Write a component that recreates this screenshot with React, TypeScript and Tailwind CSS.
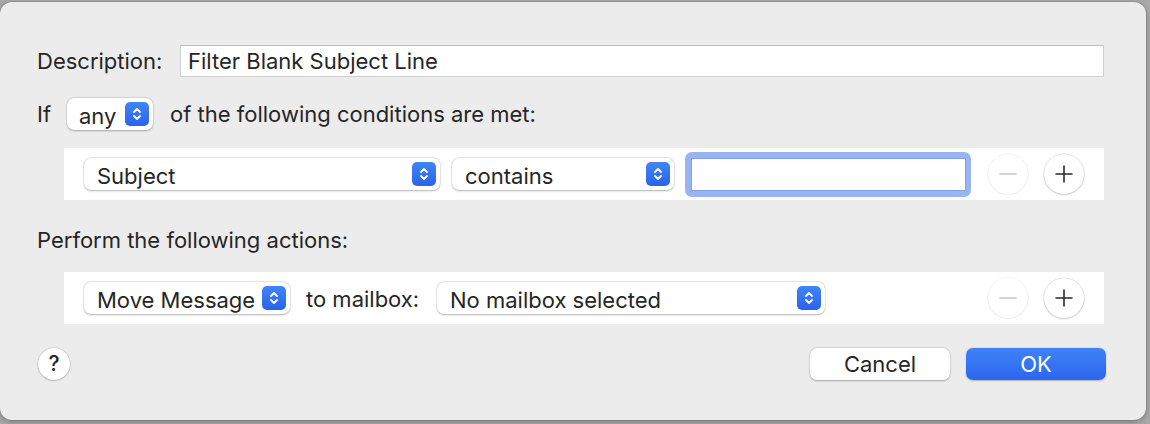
import React from 'react';

const FONT = 'font-[Inter,"Liberation_Sans",sans-serif]';
const POPUP =
  'relative flex h-[32px] shrink-0 items-center rounded-[7px] bg-white pl-[13px] text-[22px] text-[#262626] shadow-[0_0.5px_2px_rgba(0,0,0,0.28),0_0_0_0.5px_rgba(0,0,0,0.08)]';

function Stepper() {
  return (
    <span className="absolute right-[4px] top-[4px] flex h-[24px] w-[24px] items-center justify-center rounded-[5px] bg-gradient-to-b from-[#4285f6] to-[#2a63e8]">
      <svg width="10" height="16" viewBox="0 0 10 16" fill="none">
        <path
          d="M2 6 L5 3 L8 6 M2 10 L5 13 L8 10"
          stroke="white"
          strokeWidth="1.8"
          strokeLinecap="round"
          strokeLinejoin="round"
        />
      </svg>
    </span>
  );
}

function Popup({ label, width }: { label: string; width: string }) {
  return (
    <div className={`${POPUP} ${width}`}>
      <span className="pt-[3px] leading-[28px]">{label}</span>
      <Stepper />
    </div>
  );
}

function RoundButton({ kind }: { kind: 'minus' | 'plus' }) {
  const disabled = kind === 'minus';
  return (
    <button
      type="button"
      aria-label={kind === 'minus' ? 'Remove' : 'Add'}
      className={`flex h-[40px] w-[40px] shrink-0 items-center justify-center rounded-full bg-white ${
        disabled
          ? 'shadow-[0_0_0_0.5px_rgba(0,0,0,0.08),0_0.5px_1.5px_rgba(0,0,0,0.08)]'
          : 'shadow-[0_0.5px_2px_rgba(0,0,0,0.3),0_0_0_0.5px_rgba(0,0,0,0.08)]'
      }`}
    >
      <svg width="20" height="20" viewBox="0 0 20 20">
        <path
          d={disabled ? 'M2 10 H18' : 'M2 10 H18 M10 2 V18'}
          stroke={disabled ? '#c4c4c4' : '#2a2a2a'}
          strokeWidth="1.6"
          strokeLinecap="round"
        />
      </svg>
    </button>
  );
}

export default function App() {
  return (
    <div className={`h-[424px] w-[1150px] overflow-hidden bg-[#a9a9a9] ${FONT}`}>
      <div className="mt-[2px] flex h-[418px] w-[1146px] flex-col rounded-[12px] bg-[#ececec] pl-[37px] pr-[42px] text-[22px] text-[#262626] shadow-[0_0_0_0.5px_rgba(0,0,0,0.2),0_2px_6px_rgba(0,0,0,0.25)]">
        <div className="mt-[43px] flex h-[32px] items-center">
          <span className="w-[143px] shrink-0">Description:</span>
          <div className="flex h-[32px] flex-1 items-center border border-[#cfcfcf] border-t-[#bcbcbc] bg-white pl-[7px] pt-[1px]">
            Filter Blank Subject Line
          </div>
        </div>

        <div className="mt-[21px] flex h-[32px] items-center">
          <span className="w-[30px] shrink-0">If</span>
          <Popup label="any" width="w-[86px] !pl-[12px]" />
          <span className="ml-[17px]">of the following conditions are met:</span>
        </div>

        <div className="ml-[27px] mt-[18px] flex h-[52px] items-center bg-white pl-[20px] pr-[20px]">
          <Popup label="Subject" width="w-[356px]" />
          <div className="ml-[12px]">
            <Popup label="contains" width="w-[222px]" />
          </div>
          <div className="ml-[11px] flex h-[45px] w-[286px] items-center justify-center rounded-[7px] bg-[#98b5f2]">
            <div className="h-[33px] w-[275px] border border-[#7fa2ea] bg-white" />
          </div>
          <div className="ml-auto flex gap-[16px]">
            <RoundButton kind="minus" />
            <RoundButton kind="plus" />
          </div>
        </div>

        <div className="mt-[28px] flex h-[24px] items-center pt-[1px]">Perform the following actions:</div>

        <div className="ml-[27px] mt-[20px] flex h-[52px] items-center bg-white pl-[20px] pr-[20px]">
          <Popup label="Move Message" width="w-[206px]" />
          <span className="ml-[16px] w-[131px] shrink-0 pt-[3px]">to mailbox:</span>
          <Popup label="No mailbox selected" width="w-[388px]" />
          <div className="ml-auto flex gap-[16px]">
            <RoundButton kind="minus" />
            <RoundButton kind="plus" />
          </div>
        </div>

        <div className="-mr-[2px] mt-[24px] flex h-[32px] items-center">
          <button
            type="button"
            aria-label="Help"
            className="ml-[1px] flex h-[32px] w-[32px] items-center justify-center rounded-full bg-white text-[21px] font-medium text-[#262626] shadow-[0_0.5px_2px_rgba(0,0,0,0.3),0_0_0_0.5px_rgba(0,0,0,0.08)]"
          >
            ?
          </button>
          <button
            type="button"
            className="ml-auto h-[32px] w-[140px] rounded-[7px] bg-white text-[22px] text-[#262626] shadow-[0_0.5px_2px_rgba(0,0,0,0.28),0_0_0_0.5px_rgba(0,0,0,0.08)]"
          >
            Cancel
          </button>
          <button
            type="button"
            className="ml-[16px] h-[32px] w-[140px] rounded-[7px] bg-gradient-to-b from-[#3f82f7] to-[#2d66ef] text-[22px] text-white shadow-[0_0.5px_1.5px_rgba(0,0,0,0.25)]"
          >
            OK
          </button>
        </div>
      </div>
    </div>
  );
}
